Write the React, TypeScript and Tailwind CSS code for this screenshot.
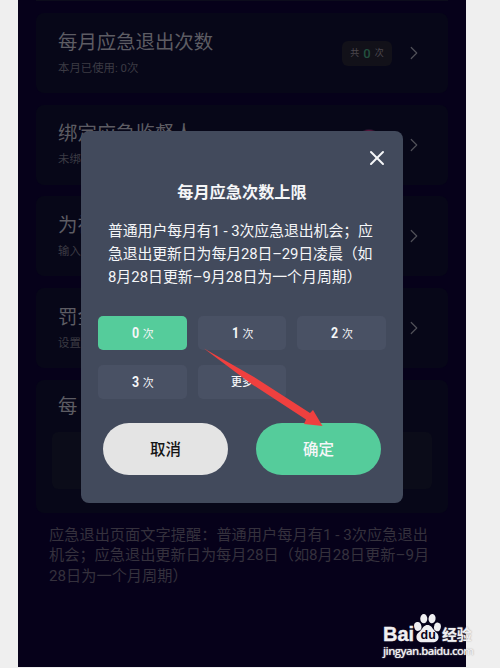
import { ChevronRight, X } from 'lucide-react'

interface SettingCardProps {
  title: string
  hint: string
  children?: React.ReactNode
}

const options = [
  { value: '0', selected: true },
  { value: '1', selected: false },
  { value: '2', selected: false },
  { value: '3', selected: false },
]

function SettingCard({ title, hint, children }: SettingCardProps) {
  return (
    <div className="flex h-20 shrink-0 items-center justify-between rounded-lg bg-[#070718] pr-[29px] pl-[22px]">
      <div className="whitespace-nowrap">
        <div className="text-[19.4px] leading-[28px] text-[#5d5c63]">{title}</div>
        <div className="mt-[3px] mb-[2px] text-[11.4px] leading-4 text-[#3c3b44]">{hint}</div>
      </div>
      <div className="flex items-center">
        {children}
        <ChevronRight className="-mr-1.5 ml-[11px] h-[22px] w-[22px] text-[#505058]" strokeWidth={1.3} />
      </div>
    </div>
  )
}

function Watermark() {
  return (
    <div className="absolute top-[614px] left-[383px] w-[96px] text-[#f0eff2]">
      <div className="flex h-[30px] items-end">
        <span className="w-[31px] font-['Liberation_Sans'] text-[20px] leading-[20px] font-bold [-webkit-text-stroke:0.4px_#f0eff2]">Bai</span>
        <svg viewBox="0 0 26 29" className="mb-px h-[30px] w-[27px]" fill="currentColor">
          <ellipse cx="3.6" cy="13" rx="3.5" ry="4.3" transform="rotate(-12 3.6 13)" />
          <ellipse cx="9.4" cy="5.5" rx="3.4" ry="4.5" />
          <ellipse cx="17.4" cy="5.5" rx="3.4" ry="4.5" transform="rotate(8 17.4 5.5)" />
          <ellipse cx="22.6" cy="13.5" rx="3.3" ry="4.2" transform="rotate(12 22.6 13.5)" />
          <path d="M13 11.5c3 0 4.5 2.5 6 4.7 1.6 2.3 4.9 3.600 4.700 7.300C23.500 27 21 28.500 17.500 28.300h-9C5 28.500 2.500 27 2.300 23.500c-.2-3.700 3.100-5 4.700-7.300C8.500 14 10 11.500 13 11.500z" />
          <text x="6.3" y="25.5" fontSize="12" fontWeight="bold" fontFamily="Liberation Sans" fill="#0a0418">du</text>
        </svg>
        <span className="-mb-px ml-px text-[15px] leading-[20px] font-bold tracking-[-0.3px] whitespace-nowrap [text-shadow:0_0_1.5px_#999]">经验</span>
      </div>
      <div className="font-['Open_Sans'] text-[11.3px] leading-[14px] font-semibold tracking-[-0.55px] [text-shadow:0_0_1.5px_#999]">jingyan.baidu.com</div>
    </div>
  )
}

export default function App() {
  return (
    <div className="relative flex h-[668px] w-[500px] overflow-hidden bg-[#efefef] pb-px pl-[18px] font-[Roboto,'Noto_Sans_CJK_SC',sans-serif]">
      <main className="flex w-[448px] flex-col bg-[#06011a] px-[18px]">
        <div className="h-px shrink-0 bg-[#0c0c1c]" />
        <div className="mt-3 flex flex-col gap-[11.7px]">
          <SettingCard title="每月应急退出次数" hint="本月已使用: 0次">
            <div className="flex h-[25px] w-[50px] items-center justify-center gap-1 rounded-md bg-[#121119] pt-px text-[9px] text-[#4d484f]">
              <span className="pt-px">共</span>
              <span className="text-[13px] font-medium text-[#22503f]">0</span>
              <span className="pt-px">次</span>
            </div>
          </SettingCard>
          <SettingCard title="绑定应急监督人" hint="未绑定">
            <div className="mr-[12px] h-[30px] w-[22px] rounded-full bg-[#5b173c] ring-1 ring-[#22112a]" />
          </SettingCard>
          <SettingCard title="为视频" hint="输入" />
          <SettingCard title="罚金" hint="设置" />
          <div className="h-[133px] rounded-lg bg-[#070718] px-4 pt-[13px]">
            <div className="pl-1.5 text-[19.4px] leading-7 text-[#5d5c63]">每</div>
            <div className="mt-[11px] h-[57px] rounded-md bg-[#0b0c19]" />
          </div>
        </div>
        <div className="mt-3 ml-[13px] text-[15.2px] leading-[20.5px] whitespace-nowrap text-[#35313d]">
          <p className="tracking-[0.03px]">应急退出页面文字提醒：普通用户每月有1 - 3次应急退出</p>
          <p>机会；应急退出更新日为每月28日（如8月28日更新–9月</p>
          <p>28日为一个月周期）</p>
        </div>
      </main>

      {/* Limit dialog */}
      <div className="absolute top-[131px] left-[81px] h-[372px] w-[322px] rounded-lg bg-[#424a5c] px-[17px] pt-[15px] text-[#f5f6f8]">
        <div className="flex justify-end">
          <X className="-mr-[3px] h-6 w-6" strokeWidth={2} />
        </div>
        <h2 className="mt-[11px] text-center text-[16.2px] leading-6 font-bold">每月应急次数上限</h2>
        <div className="mt-[15px] ml-[10px] text-[14.9px] leading-[23px] whitespace-nowrap">
          <p className="tracking-[-0.08px]">普通用户每月有1 - 3次应急退出机会；应</p>
          <p className="tracking-[-0.12px]">急退出更新日为每月28日–29日凌晨（如</p>
          <p>8月28日更新–9月28日为一个月周期）</p>
        </div>
        <div className="mt-[27px] grid grid-cols-3 gap-x-[11px] gap-y-[15px]">
          {options.map((option) => (
            <button
              key={option.value}
              className={`flex h-[34px] items-center justify-center gap-[3px] rounded-[5px] pt-0.5 text-[11px] ${option.selected ? 'bg-[#55cc9b]' : 'bg-[#495164]'}`}
            >
              <span className="inline-block scale-x-80 text-[15.5px] font-bold">{option.value}</span>
              <span className="pt-0.5">次</span>
            </button>
          ))}
          <button className="h-[34px] rounded-[5px] bg-[#495164] pt-[3px] text-[11px] font-medium">更多</button>
        </div>
        <div className="mt-6 flex justify-between px-[5px]">
          <button className="h-[52px] w-[125px] rounded-full bg-[#e4e4e4] pt-[3px] text-[15.5px] font-medium text-[#151515]">取消</button>
          <button className="h-[52px] w-[125px] rounded-full bg-[#55cc9b] pt-[3px] text-[15.5px] font-medium">确定</button>
        </div>
      </div>

      {/* Arrow pointing at the confirm button */}
      <svg className="absolute top-[345px] left-[200px] h-[90px] w-[130px]" viewBox="200 345 130 90" fill="#ef403f">
        <path d="M204 348.5 L254 377 L310 413 L313 410 L322.5 426 L304 424 L306 419.5 L250 383 Z" />
      </svg>
      <Watermark />
    </div>
  )
}
